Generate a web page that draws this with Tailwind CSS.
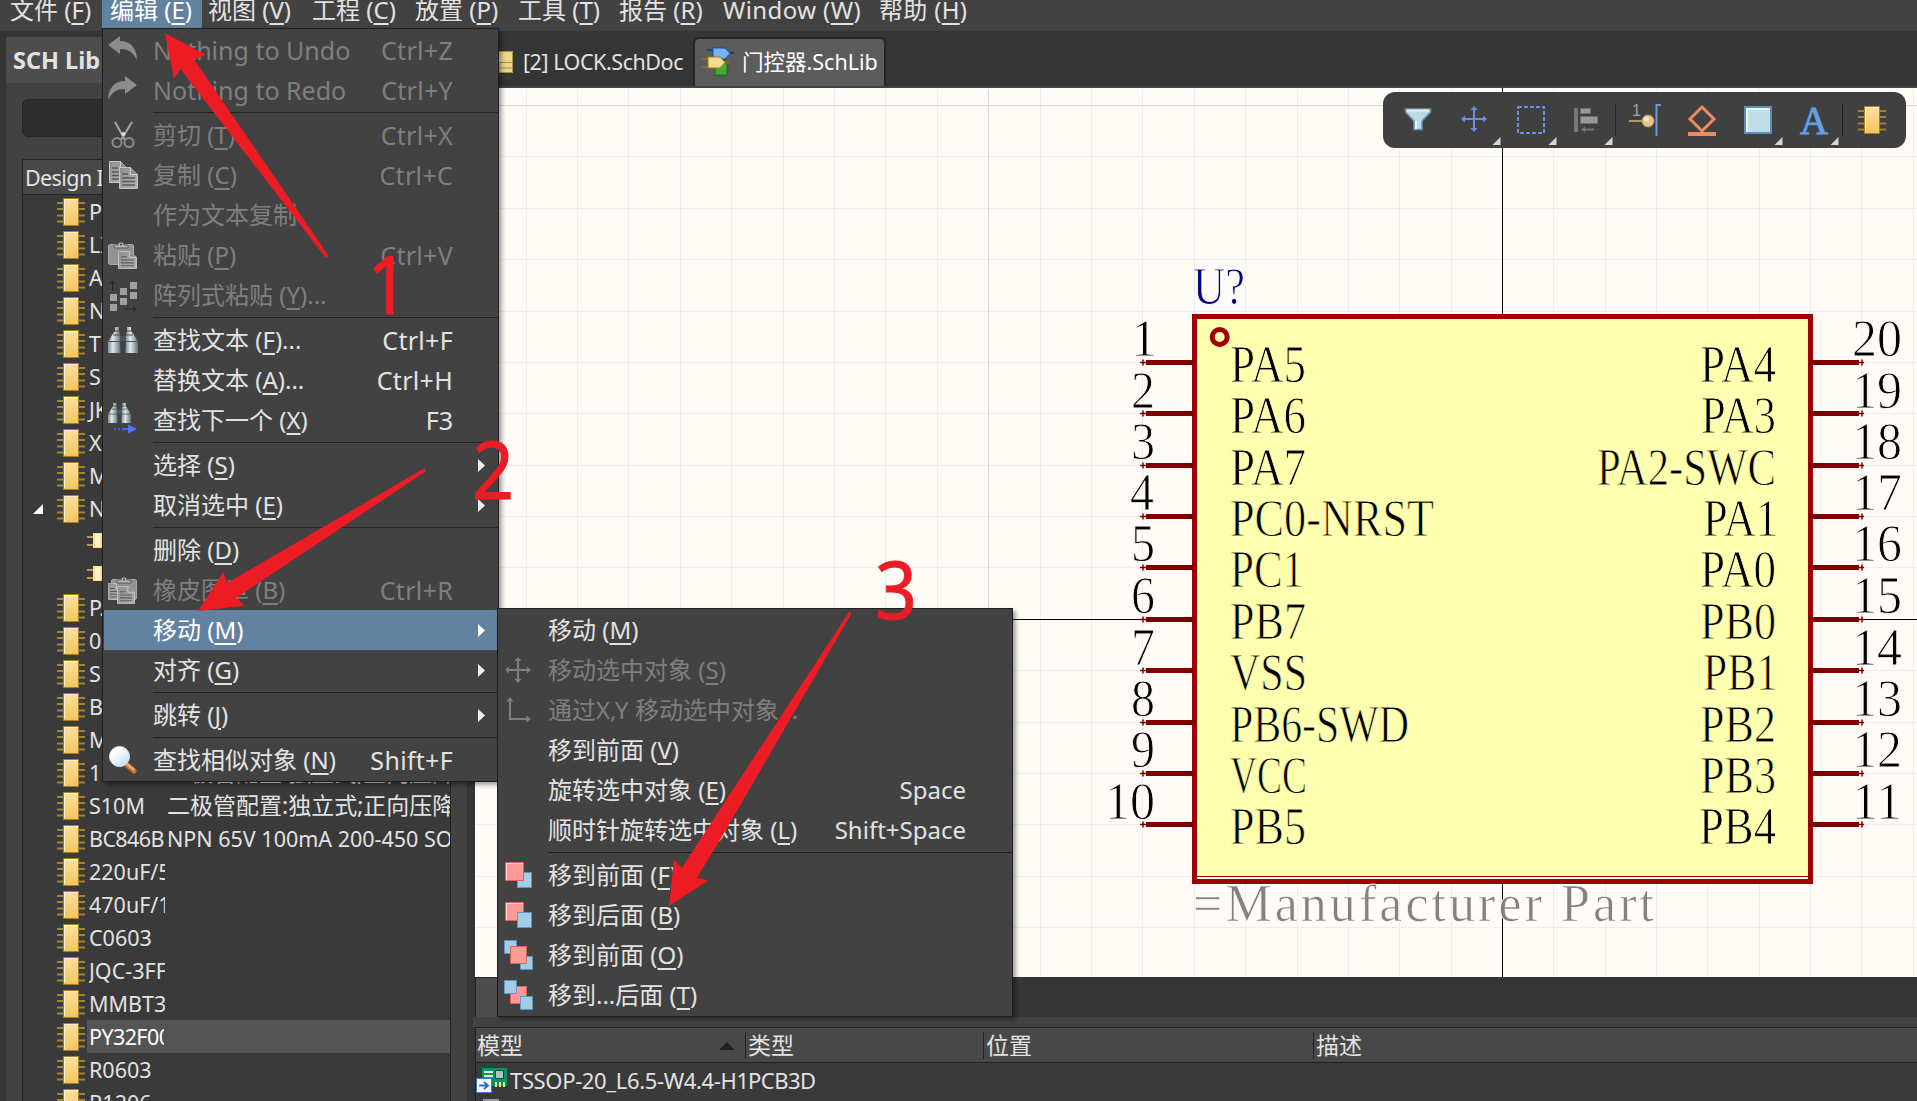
<!DOCTYPE html>
<html lang="zh-CN">
<head>
<meta charset="utf-8">
<title>SCH Library</title>
<script src="https://cdn.jsdelivr.net/npm/@tailwindcss/browser@4"></script>
</head>
<body class="bg-[#353535]">
<svg class="absolute size-0">
  <defs>
    <linearGradient id="gold" x1="0" y1="0" x2="0" y2="1"><stop offset="0" stop-color="#f9e0a4"/><stop offset="1" stop-color="#f3c65a"/></linearGradient>
    <linearGradient id="steel" x1="0" y1="0" x2="1" y2="0"><stop offset="0" stop-color="#7d8b93"/><stop offset=".4" stop-color="#dfe9ee"/><stop offset="1" stop-color="#64727a"/></linearGradient>
    <linearGradient id="grey" x1="0" y1="0" x2="1" y2="1"><stop offset="0" stop-color="#8f8f8f"/><stop offset="1" stop-color="#b2b2b2"/></linearGradient>
    <linearGradient id="lens" x1="0" y1="0" x2="1" y2="1"><stop offset=".3" stop-color="#ffffff"/><stop offset="1" stop-color="#b5d6f2"/></linearGradient>
    <symbol id="chip" viewBox="0 0 28 28">
      <path d="M0 5h28M0 11h28M0 17.500h28M0 23.500h28" stroke="#a08532" stroke-width="2"/>
      <rect x="6.500" y=".5" width="15" height="27" fill="url(#gold)" stroke="#a47e28"/>
      <path d="M7.500 26V1.500H21" fill="none" stroke="#fff3cf"/>
    </symbol>
    <symbol id="gate" viewBox="0 0 24 20">
      <path d="M0 5h8M0 13h8" stroke="#b09a5c" stroke-width="2"/>
      <rect x="6" y="1" width="18" height="16" fill="#f8dd94"/><rect x="8" y="2" width="5" height="13" fill="#fff4d2"/>
      <path d="M6 17h18" stroke="#4b3418" stroke-width="2"/>
    </symbol>
    <symbol id="page" viewBox="0 0 19 22" preserveAspectRatio="none">
      <path d="M.5.5h11l7 7v14H.5z" fill="url(#grey)" stroke="#c4c4c4"/>
      <path d="M11.500.5v7h7" fill="#8b8b8b" stroke="#d0d0d0"/>
      <path d="M3 7h6M3 11h13M3 14.500h13M3 18h13" stroke="#5a5a5a" stroke-width="1.300"/>
    </symbol>
    <symbol id="clip" viewBox="0 0 26 24">
      <rect x=".5" y="3.500" width="25" height="20" rx="1.500" fill="#929292" stroke="#a8a8a8"/>
      <path d="M6 7V4h4a3 3 0 0 1 6 0h4v3z" fill="#b4b4b4" stroke="#5c5c5c"/><circle cx="13" cy="3.500" r="1" fill="#444"/>
    </symbol>
    <symbol id="binoc" viewBox="0 0 30 26">
      <path d="M11 9h8v5h-8z" fill="#4a555c"/>
      <path d="M7 0h4v4l1 4v6l.5 12H0V15l4-7 3-4z" fill="url(#steel)"/>
      <path d="M19 0h4v4l3 4 4 7v11H17.500l.5-12V8l1-4z" fill="url(#steel)"/>
      <path d="M1 14.500h11.500M17.500 14.500h11.500M5 8h7M18 8h7M7 4h4M19 4h4" stroke="#46535b"/>
    </symbol>
    <symbol id="cross" viewBox="0 0 26 26">
      <path d="M3 13h20M13 3v20" stroke="currentColor" stroke-width="2"/>
      <path d="M0 13l4-3.500v7zM26 13l-4-3.500v7zM13 0L9.500 4h7zM13 26l-3.500-4h7z" fill="currentColor"/>
    </symbol>
  </defs>
</svg>

<div class="relative flex h-[1101px] w-[1917px] flex-col overflow-hidden bg-[#353535] font-['Noto_Sans','Noto_Sans_CJK_SC',sans-serif] text-[#e2e2e2]">

  <!-- menu bar -->
  <nav class="flex h-[31px] shrink-0 bg-[#424242] text-[24px] leading-[20px] whitespace-pre">
    <div class="w-[102px] pl-[10px]">文件 (<u class="underline-offset-4">F</u>)</div>
    <div class="h-[28px] w-[100px] bg-[#6282a0] pl-[8px] text-white">编辑 (<u class="underline-offset-4">E</u>)</div>
    <div class="w-[104px] pl-[6px]">视图 (<u class="underline-offset-4">V</u>)</div>
    <div class="w-[102px] pl-[6px]">工程 (<u class="underline-offset-4">C</u>)</div>
    <div class="w-[102px] pl-[7px]">放置 (<u class="underline-offset-4">P</u>)</div>
    <div class="w-[101px] pl-[8px]">工具 (<u class="underline-offset-4">T</u>)</div>
    <div class="w-[104px] pl-[8px]">报告 (<u class="underline-offset-4">R</u>)</div>
    <div class="w-[156px] pl-[8px] tracking-[0.400px]">Window (<u class="underline-offset-4">W</u>)</div>
    <div class="pl-[8px] tracking-[0.300px]">帮助 (<u class="underline-offset-4">H</u>)</div>
  </nav>

  <div class="flex min-h-0 flex-1">
    <!-- library panel -->
    <aside class="ml-[6px] mt-[6px] flex w-[461px] shrink-0 flex-col bg-[#424242]">
      <h1 class="h-[46px] shrink-0 bg-[#4d4d4d] pl-[7px] text-[23.500px] leading-[46px] font-bold">SCH Lib</h1>
      <div class="mt-[16px] ml-[16px] h-[38px] w-[400px] shrink-0 rounded-md border border-[#242424] bg-[#2d2d2d]"></div>
      <div class="mt-[22px] ml-[16px] flex min-h-0 w-[429px] flex-1 flex-col border-x border-t border-[#222] bg-[#3a3a3a] text-[21.500px]">
        <div class="h-[35px] shrink-0 border-b border-[#222] bg-[#484848] pl-[2px] leading-[36px] tracking-[-0.600px]">Design I</div>
        <div class="flex min-h-0 flex-1 flex-col overflow-hidden leading-[33px] whitespace-nowrap">
          <div class="flex h-[33px] shrink-0 items-center pl-[34px]"><svg class="mr-1 size-7"><use href="#chip"/></svg>P</div>
          <div class="flex h-[33px] shrink-0 items-center pl-[34px]"><svg class="mr-1 size-7"><use href="#chip"/></svg>LI</div>
          <div class="flex h-[33px] shrink-0 items-center pl-[34px]"><svg class="mr-1 size-7"><use href="#chip"/></svg>A</div>
          <div class="flex h-[33px] shrink-0 items-center pl-[34px]"><svg class="mr-1 size-7"><use href="#chip"/></svg>N</div>
          <div class="flex h-[33px] shrink-0 items-center pl-[34px]"><svg class="mr-1 size-7"><use href="#chip"/></svg>T</div>
          <div class="flex h-[33px] shrink-0 items-center pl-[34px]"><svg class="mr-1 size-7"><use href="#chip"/></svg>S</div>
          <div class="flex h-[33px] shrink-0 items-center pl-[34px]"><svg class="mr-1 size-7"><use href="#chip"/></svg>JK</div>
          <div class="flex h-[33px] shrink-0 items-center pl-[34px]"><svg class="mr-1 size-7"><use href="#chip"/></svg>X</div>
          <div class="flex h-[33px] shrink-0 items-center pl-[34px]"><svg class="mr-1 size-7"><use href="#chip"/></svg>M</div>
          <div class="flex h-[33px] shrink-0 items-center pl-[10px]"><svg class="mr-[14px] size-[10px]" viewBox="0 0 10 10"><path d="M10 0v10H0z" fill="#fff"/></svg><svg class="mr-1 size-7"><use href="#chip"/></svg>N</div>
          <div class="flex h-[33px] shrink-0 items-center pl-[64px]"><svg class="h-5 w-6"><use href="#gate"/></svg></div>
          <div class="flex h-[33px] shrink-0 items-center pl-[64px]"><svg class="h-5 w-6"><use href="#gate"/></svg></div>
          <div class="flex h-[33px] shrink-0 items-center pl-[34px]"><svg class="mr-1 size-7"><use href="#chip"/></svg>P.</div>
          <div class="flex h-[33px] shrink-0 items-center pl-[34px]"><svg class="mr-1 size-7"><use href="#chip"/></svg>0</div>
          <div class="flex h-[33px] shrink-0 items-center pl-[34px]"><svg class="mr-1 size-7"><use href="#chip"/></svg>S</div>
          <div class="flex h-[33px] shrink-0 items-center pl-[34px]"><svg class="mr-1 size-7"><use href="#chip"/></svg>B</div>
          <div class="flex h-[33px] shrink-0 items-center pl-[34px]"><svg class="mr-1 size-7"><use href="#chip"/></svg>M</div>
          <div class="flex h-[33px] shrink-0 items-center pl-[34px]"><svg class="mr-1 size-7 shrink-0"><use href="#chip"/></svg><span class="w-[78px] shrink-0">1</span><span class="text-[23px]">二极管配置:独立式;正向压降</span></div>
          <div class="flex h-[33px] shrink-0 items-center pl-[34px]"><svg class="mr-1 size-7 shrink-0"><use href="#chip"/></svg><span class="w-[78px] shrink-0">S10M</span><span class="text-[23px]">二极管配置:独立式;正向压降</span></div>
          <div class="flex h-[33px] shrink-0 items-center pl-[34px]"><svg class="mr-1 size-7 shrink-0"><use href="#chip"/></svg><span class="w-[78px] shrink-0 overflow-hidden tracking-[-0.600px]">BC846B</span><span>NPN 65V 100mA 200-450 SO</span></div>
          <div class="flex h-[33px] shrink-0 items-center pl-[34px]"><svg class="mr-1 size-7 shrink-0"><use href="#chip"/></svg><span class="w-[76px] overflow-hidden">220uF/50</span></div>
          <div class="flex h-[33px] shrink-0 items-center pl-[34px]"><svg class="mr-1 size-7 shrink-0"><use href="#chip"/></svg><span class="w-[76px] overflow-hidden">470uF/16</span></div>
          <div class="flex h-[33px] shrink-0 items-center pl-[34px]"><svg class="mr-1 size-7 shrink-0"><use href="#chip"/></svg>C0603</div>
          <div class="flex h-[33px] shrink-0 items-center pl-[34px]"><svg class="mr-1 size-7 shrink-0"><use href="#chip"/></svg><span class="w-[76px] overflow-hidden">JQC-3FF</span></div>
          <div class="flex h-[33px] shrink-0 items-center pl-[34px]"><svg class="mr-1 size-7 shrink-0"><use href="#chip"/></svg><span class="w-[76px] overflow-hidden">MMBT3</span></div>
          <div class="flex h-[33px] shrink-0 items-center pl-[34px]"><svg class="mr-[2px] size-7 shrink-0"><use href="#chip"/></svg><div class="h-[33px] flex-1 bg-[#545454] pl-[2px] text-white"><span class="block w-[75px] overflow-hidden tracking-[-0.600px]">PY32F00</span></div></div>
          <div class="flex h-[33px] shrink-0 items-center pl-[34px]"><svg class="mr-1 size-7 shrink-0"><use href="#chip"/></svg>R0603</div>
          <div class="flex h-[33px] shrink-0 items-center pl-[34px]"><svg class="mr-1 size-7 shrink-0"><use href="#chip"/></svg>R1206</div>
        </div>
      </div>
    </aside>

    <main class="ml-[6px] flex min-w-0 flex-1 flex-col">
      <!-- document tabs -->
      <div class="flex h-[57px] shrink-0 items-start border-b-2 border-[#424242] pt-[6px] text-[21.500px]">
        <div class="flex h-[49px] w-[220px] items-center pl-[18px] leading-[49px]">
          <svg class="mr-[10px] h-[22px] w-[22px] shrink-0" viewBox="0 0 22 22"><path d="M0 0h22v22H0z" fill="#ecd88c"/><path d="M0 11.500h21M8 17h13M8 11v10M0 .5h21.500v21H0" fill="none" stroke="#a88f45"/></svg>
          <span class="tracking-[-0.450px] whitespace-nowrap">[2] LOCK.SchDoc</span>
        </div>
        <div class="flex h-[49px] w-[193px] items-center rounded-t-md border-2 border-b-0 border-[#242424] bg-[#5c5c5c] pl-[7px] text-white">
          <svg class="mr-[8px] size-8 shrink-0" viewBox="0 0 32 32">
            <path d="M13 16h12v12H13z" fill="#4aa83a" stroke="#1f6d1b"/><path d="M14 28v3M17 28v3M20 28v3M23 28v3M25 18h2M25 21h2M25 24h2" stroke="#1f6d1b"/>
            <path d="M5 3h7M26 6h6" stroke="#173e86" stroke-width="2"/><path d="M11 1h12l5 5.500L23 12H11z" fill="#76b2fb" stroke="#1f4d9c"/>
            <path d="M0 12h7M0 20h7M21 15.500h6" stroke="#8d6d12" stroke-width="2"/><path d="M6 10h12l5 5.500-5 5.500H6z" fill="#f5dc8c" stroke="#9a7920"/>
          </svg>
          <span class="whitespace-nowrap">门控器.SchLib</span>
        </div>
      </div>

      <!-- schematic sheet -->
      <div class="relative ml-[2px] h-[889px] shrink-0 bg-[#fffcf8]">
        <svg class="block h-[889px] w-[1442px]" viewBox="475 88 1442 889">
          <g fill="none" shape-rendering="crispEdges">
            <path stroke="#ecefeb" d="M526.500 89V977M577.500 89V977M628.500 89V977M680.500 89V977M731.500 89V977M783.500 89V977M834.500 89V977M885.500 89V977M937.500 89V977M1040.500 89V977M1091.500 89V977M1142.500 89V977M1194.500 89V977M1245.500 89V977M1297.500 89V977M1348.500 89V977M1399.500 89V977M1451.500 89V977M1553.500 89V977M1605.500 89V977M1656.500 89V977M1707.500 89V977M1759.500 89V977M1810.500 89V977M1861.500 89V977M1913.500 89V977M475 156.500H1917M475 208.500H1917M475 259.500H1917M475 311.500H1917M475 362.500H1917M475 413.500H1917M475 465.500H1917M475 516.500H1917M475 567.500H1917M475 670.500H1917M475 722.500H1917M475 773.500H1917M475 824.500H1917M475 876.500H1917M475 927.500H1917"/>
            <path stroke="#d6d8d4" d="M988.500 89V977M475 105.500H1917"/>
            <path stroke="#000" d="M1502.500 88V977M475 619.500H1917"/>
          </g>
          <rect x="1194.500" y="316.500" width="616" height="565" fill="#ffffb0" stroke="#a00000" stroke-width="5"/>
          <path d="M1197 878H1808" stroke="#fffcf8" stroke-width="2"/><path d="M1197 876.500H1808" stroke="#a00000"/>
          <circle cx="1219.700" cy="337" r="7.500" fill="none" stroke="#a00000" stroke-width="5"/>
          <g stroke="#800000">
            <path stroke-width="5" d="M1146 362.500h50M1146 413.500h50M1146 465.500h50M1146 516.500h50M1146 567.500h50M1146 619.500h50M1146 670.500h50M1146 722.500h50M1146 773.500h50M1146 824.500h50M1809 362.500h50M1809 413.500h50M1809 465.500h50M1809 516.500h50M1809 567.500h50M1809 619.500h50M1809 670.500h50M1809 722.500h50M1809 773.500h50M1809 824.500h50"/>
            <path stroke-width="1.500" d="M1140 362.500h6m-3-3v6M1140 413.500h6m-3-3v6M1140 465.500h6m-3-3v6M1140 516.500h6m-3-3v6M1140 567.500h6m-3-3v6M1140 619.500h6m-3-3v6M1140 670.500h6m-3-3v6M1140 722.500h6m-3-3v6M1140 773.500h6m-3-3v6M1140 824.500h6m-3-3v6M1858 362.500h6m-2-3v6M1858 413.500h6m-2-3v6M1858 465.500h6m-2-3v6M1858 516.500h6m-2-3v6M1858 567.500h6m-2-3v6M1858 619.500h6m-2-3v6M1858 670.500h6m-2-3v6M1858 722.500h6m-2-3v6M1858 773.500h6m-2-3v6M1858 824.500h6m-2-3v6"/>
          </g>
          <g class="font-['Liberation_Serif',serif] text-[52px]" transform="translate(0 .7)">
            <text x="1193" y="303" fill="#000080" stroke="#fffcf8" stroke-width=".9" textLength="52" lengthAdjust="spacingAndGlyphs">U?</text>
            <text x="1193" y="920" fill="#828282" stroke="#fffcf8" stroke-width=".7" textLength="461">=Manufacturer Part</text>
            <g fill="#000" stroke="#fffcf8" stroke-width=".9">
              <text x="1131" y="355" textLength="26" lengthAdjust="spacingAndGlyphs">1</text><text x="1131" y="407" textLength="24" lengthAdjust="spacingAndGlyphs">2</text>
              <text x="1131" y="458" textLength="24" lengthAdjust="spacingAndGlyphs">3</text><text x="1130" y="509" textLength="24" lengthAdjust="spacingAndGlyphs">4</text>
              <text x="1131" y="560" textLength="24" lengthAdjust="spacingAndGlyphs">5</text><text x="1131" y="612" textLength="24" lengthAdjust="spacingAndGlyphs">6</text>
              <text x="1131" y="664" textLength="24" lengthAdjust="spacingAndGlyphs">7</text><text x="1131" y="715" textLength="24" lengthAdjust="spacingAndGlyphs">8</text>
              <text x="1131" y="766" textLength="24" lengthAdjust="spacingAndGlyphs">9</text><text x="1105" y="818" textLength="50" lengthAdjust="spacingAndGlyphs">10</text>
              <text x="1852" y="355" textLength="50" lengthAdjust="spacingAndGlyphs">20</text><text x="1852" y="407" textLength="50" lengthAdjust="spacingAndGlyphs">19</text>
              <text x="1852" y="458" textLength="50" lengthAdjust="spacingAndGlyphs">18</text><text x="1852" y="509" textLength="50" lengthAdjust="spacingAndGlyphs">17</text>
              <text x="1852" y="560" textLength="50" lengthAdjust="spacingAndGlyphs">16</text><text x="1852" y="612" textLength="50" lengthAdjust="spacingAndGlyphs">15</text>
              <text x="1852" y="664" textLength="50" lengthAdjust="spacingAndGlyphs">14</text><text x="1852" y="715" textLength="50" lengthAdjust="spacingAndGlyphs">13</text>
              <text x="1852" y="766" textLength="50" lengthAdjust="spacingAndGlyphs">12</text><text x="1852" y="818" textLength="50" lengthAdjust="spacingAndGlyphs">11</text>
            </g>
            <g fill="#000" stroke="#ffffb0" stroke-width=".9">
              <text x="1230" y="381" textLength="76" lengthAdjust="spacingAndGlyphs">PA5</text><text x="1230" y="432" textLength="76" lengthAdjust="spacingAndGlyphs">PA6</text>
              <text x="1230" y="484" textLength="76" lengthAdjust="spacingAndGlyphs">PA7</text><text x="1230" y="535" textLength="204" lengthAdjust="spacingAndGlyphs">PC0-NRST</text>
              <text x="1230" y="586" textLength="74" lengthAdjust="spacingAndGlyphs">PC1</text><text x="1230" y="638" textLength="76" lengthAdjust="spacingAndGlyphs">PB7</text>
              <text x="1230" y="689" textLength="77" lengthAdjust="spacingAndGlyphs">VSS</text><text x="1230" y="741" textLength="179" lengthAdjust="spacingAndGlyphs">PB6-SWD</text>
              <text x="1230" y="792" textLength="77" lengthAdjust="spacingAndGlyphs">VCC</text><text x="1230" y="843" textLength="76" lengthAdjust="spacingAndGlyphs">PB5</text>
              <text x="1700" y="381" textLength="76" lengthAdjust="spacingAndGlyphs">PA4</text><text x="1701" y="432" textLength="75" lengthAdjust="spacingAndGlyphs">PA3</text>
              <text x="1597" y="484" textLength="179" lengthAdjust="spacingAndGlyphs">PA2-SWC</text><text x="1703" y="535" textLength="75" lengthAdjust="spacingAndGlyphs">PA1</text>
              <text x="1700" y="586" textLength="76" lengthAdjust="spacingAndGlyphs">PA0</text><text x="1700" y="638" textLength="76" lengthAdjust="spacingAndGlyphs">PB0</text>
              <text x="1703" y="689" textLength="75" lengthAdjust="spacingAndGlyphs">PB1</text><text x="1700" y="741" textLength="76" lengthAdjust="spacingAndGlyphs">PB2</text>
              <text x="1700" y="792" textLength="76" lengthAdjust="spacingAndGlyphs">PB3</text><text x="1699" y="843" textLength="77" lengthAdjust="spacingAndGlyphs">PB4</text>
            </g>
          </g>
        </svg>

        <!-- floating tool bar -->
        <div class="absolute top-[4px] left-[908px] flex h-[56px] w-[523px] rounded-xl bg-[#404040] px-[7px]">
          <svg class="size-14 shrink-0" viewBox="0 0 56 56"><path d="M15.500 17h25v3L32 29v8.500h-8V29l-8.500-9z" fill="#b9dbe3" stroke="#6d93ac" stroke-width="1.500"/><path d="M17 18.500h22" stroke="#e6f5f8" stroke-width="2"/><path d="M26 29v8" stroke="#e6f5f8" stroke-width="2"/></svg>
          <svg class="size-14 shrink-0 text-[#6a8fe0]" viewBox="0 0 56 56"><use href="#cross" x="15" y="14" width="26" height="26"/><path d="M54.500 45v8h-8z" fill="#d6d6d6"/></svg>
          <svg class="size-14 shrink-0" viewBox="0 0 56 56"><rect x="16" y="15" width="26" height="26" fill="none" stroke="#6a8fe0" stroke-width="2" stroke-dasharray="4 2"/><path d="M54.500 45v8h-8z" fill="#d6d6d6"/></svg>
          <svg class="size-14 shrink-0" viewBox="0 0 56 56"><path d="M16 16h4v24h-4z" fill="#777"/><path d="M22.500 16.500h10v5h-10zM22.500 24.500h17v7h-17z" fill="#999" stroke="#6e6e6e"/><path d="M23 37.500l4-3v2h9v2h-9v2z" fill="#777"/><path d="M54.500 45v8h-8z" fill="#d6d6d6"/></svg>
          <div class="mt-3 mr-[2px] ml-px h-8 w-px shrink-0 bg-[#222]"></div>
          <svg class="size-14 shrink-0" viewBox="0 0 56 56"><text x="14" y="24" font-size="16" fill="#9aa5ab" class="font-['Liberation_Sans',sans-serif]">1</text><path d="M11 29h14" stroke="#b1975a" stroke-width="2"/><path d="M43 13h-4.500v31" fill="none" stroke="#6a93e0" stroke-width="2"/><circle cx="30" cy="29" r="6" fill="#e2c78b" stroke="#b1975a"/><circle cx="28.500" cy="27" r="2.500" fill="#f5e6c0"/></svg>
          <svg class="size-14 shrink-0" viewBox="0 0 56 56"><path d="M28 15l12 12-12 12-12-12z" fill="none" stroke="#ec8a66" stroke-width="3"/><path d="M14 42h28" stroke="#ec8a66" stroke-width="4"/></svg>
          <svg class="size-14 shrink-0" viewBox="0 0 56 56"><rect x="15" y="15" width="26" height="26" fill="#c1dfe8" stroke="#5d8db8" stroke-width="2"/><path d="M17 40V17h23" fill="none" stroke="#eaf7fa" stroke-width="2"/><path d="M52.500 45v8h-8z" fill="#d6d6d6"/></svg>
          <svg class="size-14 shrink-0" viewBox="0 0 56 56"><text x="14" y="42" font-size="41" textLength="28" lengthAdjust="spacingAndGlyphs" fill="#639fea" stroke="#639fea" class="font-['Liberation_Serif',serif]">A</text><path d="M52.500 45v8h-8z" fill="#d6d6d6"/></svg>
          <div class="mt-3 mr-px h-8 w-px shrink-0 bg-[#222]"></div>
          <svg class="size-14 shrink-0" viewBox="0 0 56 56"><use href="#chip" x="14" y="14" width="28" height="28"/></svg>
        </div>
      </div>

      <!-- model list -->
      <div class="flex h-[40px] shrink-0 pl-[2px]"><div class="w-[90px] border-t border-l border-[#242424] bg-[#4d4d4d]"></div></div>
      <div class="h-[10px] shrink-0 bg-[#424242]"></div>
      <div class="ml-[2px] flex flex-1 flex-col border-l border-t border-[#222] bg-[#3a3a3a]">
        <div class="flex h-[35px] shrink-0 items-center border-b border-t border-[#222] border-t-[#525252] bg-[#484848] text-[23px]">
          <div class="flex w-[270px] items-center justify-between border-r border-[#222] pr-[10px] pl-px leading-[27px]">模型<svg class="h-2 w-4" viewBox="0 0 16 8"><path d="M8 0l8 8H0z" fill="#222"/></svg></div>
          <div class="w-[238px] border-r border-[#222] pl-[2px] leading-[27px]">类型</div>
          <div class="w-[330px] border-r border-[#222] pl-[2px] leading-[27px]">位置</div>
          <div class="pl-[2px] leading-[27px]">描述</div>
        </div>
        <div class="flex h-[34px] shrink-0 items-center text-[22px] whitespace-nowrap">
          <svg class="mr-[2px] h-[26px] w-8 shrink-0" viewBox="0 0 32 26"><path d="M6 1h25v18H6z" fill="#0e9163"/><path d="M8 5h9M8 9h9M8 13h5" stroke="#d9f4e8" stroke-width="2"/><rect x="19.500" y="3.500" width="8" height="8" fill="#b6c2bd" stroke="#0a4a34"/><path d="M20 15v5M24 15v5M28 15v5" stroke="#e8f08a" stroke-width="2"/><rect x=".5" y="11.500" width="15" height="14" fill="#fff" stroke="#3a79d8"/><path d="M3 18.500h8M8 15l4 3.500L8 22" fill="none" stroke="#2b6cd4" stroke-width="2"/></svg>
          <span class="w-[235px] shrink-0 overflow-hidden tracking-[-0.350px]">TSSOP-20_L6.5-W4.4-H1</span><span class="pl-[3px] tracking-[-0.500px]">PCB3D</span>
        </div>
        <div class="mt-[2px] ml-[7px] h-4 w-4 border-2 border-[#999] bg-[#ddd]"></div>
      </div>
    </main>
  </div>

  <!-- Edit menu -->
  <div class="absolute top-[28px] left-[102px] flex h-[754px] w-[397px] flex-col border border-[#1e1e1e] bg-[#424242] py-px text-[24px] leading-[40px] whitespace-pre shadow-[3px_3px_4px_rgba(0,0,0,0.350)]">
    <div class="flex h-10 items-center pr-[45px] text-[#7f7f7f]"><svg class="mr-[15px] ml-[5px] h-7 w-[30px] shrink-0 -translate-y-0.5" viewBox="0 0 30 28"><path d="M0 11L12 2v5c10 0 17 7 17 19-4-8-9-11-17-11v5z" fill="#8c8c8c"/></svg><span class="flex-1 text-[25px]">Nothing to Undo</span><span class="text-[25px] tracking-[0.300px]">Ctrl+Z</span></div>
    <div class="flex h-10 items-center pr-[45px] text-[#7f7f7f]"><svg class="mr-[15px] ml-[5px] h-7 w-[30px] shrink-0 -translate-y-0.5" viewBox="0 0 30 28"><path d="M29 11L17 2v5C7 7 0 14 0 26c4-8 9-11 17-11v5z" fill="#8c8c8c"/></svg><span class="flex-1 text-[25px]">Nothing to Redo</span><span class="text-[25px] tracking-[0.300px]">Ctrl+Y</span></div>
    <div class="ml-[50px] h-[5px] shrink-0 pt-[2px]"><div class="h-px bg-[#222]"></div></div>
    <div class="flex h-10 items-center pr-[45px] text-[#7f7f7f]"><svg class="mr-[15px] ml-[5px] h-7 w-[30px] shrink-0" viewBox="0 0 30 28"><path d="M7 1l10 18M24 1L13 19" stroke="#a5a5a5" stroke-width="2"/><circle cx="9" cy="21.500" r="4.500" fill="none" stroke="#8a8a8a" stroke-width="2"/><circle cx="21" cy="21.500" r="4.500" fill="none" stroke="#8a8a8a" stroke-width="2"/><circle cx="15.500" cy="13" r="2" fill="#ddd"/></svg><span class="flex-1">剪切 (<u class="underline-offset-4">T</u>)</span><span class="text-[25px] tracking-[0.300px]">Ctrl+X</span></div>
    <div class="flex h-10 items-center pr-[45px] text-[#7f7f7f]"><svg class="mr-[15px] ml-[5px] h-7 w-[30px] shrink-0" viewBox="0 0 30 28"><use href="#page" x="1" y="0" width="19" height="22"/><use href="#page" x="11" y="6" width="19" height="22"/></svg><span class="flex-1">复制 (<u class="underline-offset-4">C</u>)</span><span class="text-[25px] tracking-[0.300px]">Ctrl+C</span></div>
    <div class="flex h-10 items-center pl-[50px] text-[#7f7f7f]">作为文本复制</div>
    <div class="flex h-10 items-center pr-[45px] text-[#7f7f7f]"><svg class="mr-[15px] ml-[5px] h-7 w-[30px] shrink-0" viewBox="0 0 30 28"><use href="#clip" x="0" y="0" width="26" height="24"/><use href="#page" x="10" y="10" width="19" height="18"/></svg><span class="flex-1">粘贴 (<u class="underline-offset-4">P</u>)</span><span class="text-[25px] tracking-[0.300px]">Ctrl+V</span></div>
    <div class="flex h-10 items-center pr-[45px] text-[#7f7f7f]"><svg class="mr-[15px] ml-[5px] h-[34px] w-[30px] shrink-0" viewBox="0 0 30 34"><path d="M2 16h7v7H2zM2 26h7v7H2zM12 10h7v7h-7zM12 20h7v7h-7zM22 4h7v7h-7zM22 14h7v7h-7z" fill="#a0a0a0"/><path d="M4.500 13V3M2 6l2.500-3L7 6M16 31h12M25 28.500l3 2.500-3 2.500" fill="none" stroke="#222"/></svg><span class="flex-1">阵列式粘贴 (<u class="underline-offset-4">Y</u>)...</span></div>
    <div class="ml-[50px] h-[5px] shrink-0 pt-[2px]"><div class="h-px bg-[#222]"></div></div>
    <div class="flex h-10 items-center pr-[45px]"><svg class="mr-[15px] ml-[5px] h-[26px] w-[30px] shrink-0"><use href="#binoc"/></svg><span class="flex-1">查找文本 (<u class="underline-offset-4">F</u>)...</span><span class="text-[25px] tracking-[0.300px]">Ctrl+F</span></div>
    <div class="flex h-10 items-center pr-[45px] pl-[50px]"><span class="flex-1">替换文本 (<u class="underline-offset-4">A</u>)...</span><span class="text-[25px] tracking-[0.300px]">Ctrl+H</span></div>
    <div class="flex h-10 items-center pr-[45px]"><svg class="mr-[15px] ml-[5px] h-[30px] w-[30px] shrink-0 -translate-y-0.5" viewBox="0 0 30 30"><use href="#binoc" x="0" y="0" width="23" height="20"/><path d="M6 26h2M10 26h2M14 26h7" stroke="#3f63e8" stroke-width="2"/><path d="M20 21.500l9 4.500-9 4.500z" fill="#4b78f0"/></svg><span class="flex-1">查找下一个 (<u class="underline-offset-4">X</u>)</span><span class="text-[25px]">F3</span></div>
    <div class="ml-[50px] h-[5px] shrink-0 pt-[2px]"><div class="h-px bg-[#222]"></div></div>
    <div class="flex h-10 items-center pr-[13px] pl-[50px]"><span class="flex-1">选择 (<u class="underline-offset-4">S</u>)</span><svg class="h-[13px] w-[7px]" viewBox="0 0 7 13"><path d="M0 0l7 6.500L0 13z" fill="#eee"/></svg></div>
    <div class="flex h-10 items-center pr-[13px] pl-[50px]"><span class="flex-1">取消选中 (<u class="underline-offset-4">E</u>)</span><svg class="h-[13px] w-[7px]" viewBox="0 0 7 13"><path d="M0 0l7 6.500L0 13z" fill="#eee"/></svg></div>
    <div class="ml-[50px] h-[5px] shrink-0 pt-[2px]"><div class="h-px bg-[#222]"></div></div>
    <div class="flex h-10 items-center pl-[50px]">删除 (<u class="underline-offset-4">D</u>)</div>
    <div class="flex h-10 items-center pr-[45px] text-[#7f7f7f]"><svg class="mr-[15px] ml-[5px] h-7 w-[30px] shrink-0" viewBox="0 0 30 28"><use href="#clip" x="3" y="0" width="26" height="24"/><use href="#page" x="0" y="7" width="14" height="17"/><use href="#page" x="9" y="10" width="18" height="18"/></svg><span class="flex-1">橡皮图章 (<u class="underline-offset-4">B</u>)</span><span class="text-[25px] tracking-[0.300px]">Ctrl+R</span></div>
    <div class="mx-px flex h-10 items-center bg-[#6282a0] pr-[12px] pl-[49px] text-white"><span class="flex-1">移动 (<u class="underline-offset-4">M</u>)</span><svg class="h-[13px] w-[7px]" viewBox="0 0 7 13"><path d="M0 0l7 6.500L0 13z" fill="#fff"/></svg></div>
    <div class="flex h-10 items-center pr-[13px] pl-[50px]"><span class="flex-1">对齐 (<u class="underline-offset-4">G</u>)</span><svg class="h-[13px] w-[7px]" viewBox="0 0 7 13"><path d="M0 0l7 6.500L0 13z" fill="#eee"/></svg></div>
    <div class="ml-[50px] h-[5px] shrink-0 pt-[2px]"><div class="h-px bg-[#222]"></div></div>
    <div class="flex h-10 items-center pr-[13px] pl-[50px]"><span class="flex-1">跳转 (<u class="underline-offset-4">J</u>)</span><svg class="h-[13px] w-[7px]" viewBox="0 0 7 13"><path d="M0 0l7 6.500L0 13z" fill="#eee"/></svg></div>
    <div class="ml-[50px] h-[5px] shrink-0 pt-[2px]"><div class="h-px bg-[#222]"></div></div>
    <div class="flex h-10 items-center pr-[45px]"><svg class="mr-[15px] ml-[5px] h-7 w-[30px] shrink-0" viewBox="0 0 30 28"><path d="M18 18l8 7" stroke="#c9772c" stroke-width="5" stroke-linecap="round"/><path d="M19 18l7 6" stroke="#f0b878" stroke-width="2"/><circle cx="11.500" cy="10.500" r="10" fill="url(#lens)" stroke="#dfeaf4"/></svg><span class="flex-1">查找相似对象 (<u class="underline-offset-4">N</u>)</span><span class="text-[25px] tracking-[0.300px]">Shift+F</span></div>
  </div>

  <!-- Move submenu -->
  <div class="absolute top-[608px] left-[497px] flex h-[409px] w-[516px] flex-col border border-[#1e1e1e] bg-[#424242] py-px text-[24px] leading-[40px] whitespace-pre shadow-[3px_3px_4px_rgba(0,0,0,0.350)]">
    <div class="flex h-10 items-center pl-[50px]">移动 (<u class="underline-offset-4">M</u>)</div>
    <div class="flex h-10 items-center text-[#7f7f7f]"><svg class="mr-[17px] ml-[7px] size-[26px]"><use href="#cross"/></svg>移动选中对象 (<u class="underline-offset-4">S</u>)</div>
    <div class="flex h-10 items-center text-[#7f7f7f]"><svg class="mr-[17px] ml-[7px] size-[26px]" viewBox="0 0 26 26"><path d="M5 3v19h18" fill="none" stroke="currentColor" stroke-width="2"/><path d="M5 0L1.500 4.500h7zM26 22l-4.500-3.500v7z" fill="currentColor"/></svg>通过X,Y 移动选中对象...</div>
    <div class="flex h-10 items-center pl-[50px]">移到前面 (<u class="underline-offset-4">V</u>)</div>
    <div class="flex h-10 items-center pr-[46px] pl-[50px]"><span class="flex-1">旋转选中对象 (<u class="underline-offset-4">E</u>)</span><span>Space</span></div>
    <div class="flex h-10 items-center pr-[46px] pl-[50px]"><span class="flex-1">顺时针旋转选中对象 (<u class="underline-offset-4">L</u>)</span><span>Shift+Space</span></div>
    <div class="ml-[50px] h-[5px] shrink-0 pt-[2px]"><div class="h-px bg-[#222]"></div></div>
    <div class="flex h-10 items-center"><svg class="mr-[14px] ml-[6px] h-8 w-[30px]" viewBox="0 0 30 32"><path d="M13.500 13.500h14v15h-14z" fill="#a3cbe3" stroke="#5b9bc4"/><path d="M1.500 3.500h18v18h-18z" fill="#ff9a97" stroke="#e0605e"/><path d="M2.500 21V4.500H19" fill="none" stroke="#ffd0ce"/></svg>移到前面 (<u class="underline-offset-4">F</u>)</div>
    <div class="flex h-10 items-center"><svg class="mr-[14px] ml-[6px] h-8 w-[30px]" viewBox="0 0 30 32"><path d="M1.500 3.500h18v18h-18z" fill="#ff9a97" stroke="#e0605e"/><path d="M2.500 21V4.500H19" fill="none" stroke="#ffd0ce"/><path d="M13.500 13.500h14v15h-14z" fill="#a3cbe3" stroke="#5b9bc4"/></svg>移到后面 (<u class="underline-offset-4">B</u>)</div>
    <div class="flex h-10 items-center"><svg class="mr-[14px] ml-[6px] h-8 w-[30px]" viewBox="0 0 30 32"><path d="M.5 1.500h12v13H.5zM16.500 17.500h12v13h-12z" fill="#a3cbe3" stroke="#5b9bc4"/><path d="M6.500 7.500h16v17h-16z" fill="#ff9a97" stroke="#e0605e"/></svg>移到前面 (<u class="underline-offset-4">O</u>)</div>
    <div class="flex h-10 items-center"><svg class="mr-[14px] ml-[6px] h-8 w-[30px]" viewBox="0 0 30 32"><path d="M6.500 7.500h16v17h-16z" fill="#ff9a97" stroke="#e0605e"/><path d="M.5 1.500h12v13H.5zM16.500 17.500h12v13h-12z" fill="#a3cbe3" stroke="#5b9bc4"/></svg>移到...后面 (<u class="underline-offset-4">T</u>)</div>
  </div>

  <!-- step annotations -->
  <svg class="pointer-events-none absolute inset-0 h-[1101px] w-[1917px]" viewBox="0 0 1917 1101" fill="#ed1c24">
    <path d="M165 33L206 55 194 59.500 328.500 255.500Q328 258 325.500 257.500L180.500 69 174 79z"/>
    <path d="M198 611L223.500 572 227 583 424 468.500Q426.500 469 425.500 471.500L236 598 245 605.500z"/>
    <path d="M669 906L674 859.500 681.500 868.500 700 840 849 612Q851.500 611 851.500 613.500L720 840 697 877.500 708 880.500z"/>
    <g font-size="80" stroke="#ed1c24" class="font-['Noto_Sans',sans-serif]">
      <text x="367" y="314" textLength="42" lengthAdjust="spacingAndGlyphs">1</text>
      <text x="472" y="499" textLength="42" lengthAdjust="spacingAndGlyphs">2</text>
      <text x="875" y="619" textLength="42" lengthAdjust="spacingAndGlyphs">3</text>
    </g>
  </svg>
</div>
</body>
</html>
